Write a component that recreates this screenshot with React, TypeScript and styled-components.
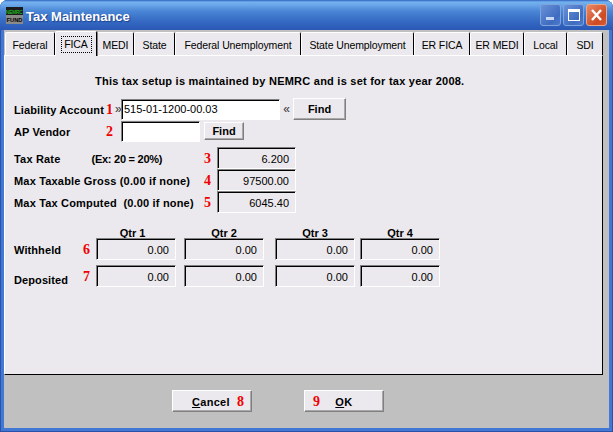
import styled, { createGlobalStyle } from "styled-components";

const GlobalStyle = createGlobalStyle`
    html, body {
        margin: 0;
        padding: 0;
        background: #fff;
        overflow: hidden;
    }
`;

const tabs = [
    { name: "Federal", width: 50 },
    { name: "FICA", width: 42, active: true },
    { name: "MEDI", width: 37 },
    { name: "State", width: 41 },
    { name: "Federal Unemployment", width: 126 },
    { name: "State Unemployment", width: 113 },
    { name: "ER FICA", width: 56 },
    { name: "ER MEDI", width: 54 },
    { name: "Local", width: 43 },
    { name: "SDI", width: 36 },
];

const limits = [
    { label: "Tax Rate", hint: "(Ex: 20 = 20%)", no: 3, value: "6.200" },
    { label: "Max Taxable Gross (0.00 if none)", no: 4, value: "97500.00" },
    { label: "Max Tax Computed  (0.00 if none)", no: 5, value: "6045.40" },
];

const quarters = [
    { name: "Qtr 1", gap: 0, nudge: 7 },
    { name: "Qtr 2", gap: 8, nudge: 0 },
    { name: "Qtr 3", gap: 11, nudge: 0 },
    { name: "Qtr 4", gap: 5, nudge: 0 },
];

const App = () => {
    return (
        <Window>
            <GlobalStyle />
            <TitleBar>
                <svg width="17" height="17" viewBox="0 0 17 17">
                    <rect width="17" height="8" fill="#1c1c1c" />
                    <rect y="8" width="17" height="9" fill="#8a8a8a" />
                    <text x="0" y="6.5" fontSize="5" textLength="16.5" lengthAdjust="spacingAndGlyphs" fontFamily="Liberation Sans" fill="#20e020">NEMRC</text>
                    <text x="0.5" y="15" fontSize="6" textLength="16" lengthAdjust="spacingAndGlyphs" fontWeight="bold" fontFamily="Liberation Sans" fill="#000">FUND</text>
                </svg>
                <TitleText>Tax Maintenance</TitleText>
                <WindowButtons>
                    <WindowButton>
                        <svg width="19" height="20" viewBox="0 0 19 20">
                            <rect x="5" y="12" width="8" height="3" fill="#c9d8f2" />
                        </svg>
                    </WindowButton>
                    <WindowButton>
                        <svg width="19" height="20" viewBox="0 0 19 20">
                            <rect x="4.5" y="4.5" width="11" height="11" fill="none" stroke="#fff" />
                            <rect x="4" y="4" width="12" height="3" fill="#fff" />
                        </svg>
                    </WindowButton>
                    <CloseButton>
                        <svg width="19" height="20" viewBox="0 0 19 20">
                            <path d="M5 5l9 10M14 5l-9 10" stroke="#fff" strokeWidth="2.4" fill="none" />
                        </svg>
                    </CloseButton>
                </WindowButtons>
            </TitleBar>
            <Body>
                <TabStrip>
                    {tabs.map((t) => (
                        <Tab key={t.name} $width={t.width} $active={!!t.active}>
                            {t.active ? <FocusRing>{t.name}</FocusRing> : t.name}
                        </Tab>
                    ))}
                </TabStrip>
                <Panel>
                    <Notice>This tax setup is maintained by NEMRC and is set for tax year 2008.</Notice>

                    <Row $height={22}>
                        <Label $width={92}>Liability Account</Label>
                        <Digit $width={9}>1</Digit>
                        <Chevron>»</Chevron>
                        <Field $width={159} $height={21}>515-01-1200-00.03</Field>
                        <Chevron $wide>«</Chevron>
                        <SmallButton $width={53} $height={22}>Find</SmallButton>
                    </Row>
                    <Row $height={22}>
                        <Label $width={92}>AP Vendor</Label>
                        <Digit $width={15}>2</Digit>
                        <Field $width={79} $height={21} />
                        <SmallButton $width={40} $height={18} $left={4}>Find</SmallButton>
                    </Row>

                    <LimitList>
                        {limits.map((l) => (
                            <Row key={l.no} $height={22}>
                                <LimitLabel>
                                    {l.label}
                                    {l.hint && <Hint>{l.hint}</Hint>}
                                </LimitLabel>
                                <Digit $width={13}>{l.no}</Digit>
                                <Field $width={79} $height={22} $right>{l.value}</Field>
                            </Row>
                        ))}
                    </LimitList>

                    <QuarterHead>
                        {quarters.map((q) => (
                            <QuarterName key={q.name} $gap={q.gap} $nudge={q.nudge}>{q.name}</QuarterName>
                        ))}
                    </QuarterHead>
                    <QuarterRow>
                        <Label $width={69}>Withheld</Label>
                        <Digit $width={13}>6</Digit>
                        {quarters.map((q) => (
                            <QuarterField key={q.name} $gap={q.gap}>0.00</QuarterField>
                        ))}
                    </QuarterRow>
                    <QuarterRow $top={5}>
                        <Label $width={69} $drop={7}>Deposited</Label>
                        <Digit $width={13}>7</Digit>
                        {quarters.map((q) => (
                            <QuarterField key={q.name} $gap={q.gap}>0.00</QuarterField>
                        ))}
                    </QuarterRow>
                </Panel>
                <Footer>
                    <BigButton $pad={19} $gap={7}>
                        <span><u>C</u>ancel</span>
                        <ButtonDigit>8</ButtonDigit>
                    </BigButton>
                    <BigButton $pad={8} $gap={15}>
                        <ButtonDigit>9</ButtonDigit>
                        <span><u>O</u>K</span>
                    </BigButton>
                </Footer>
            </Body>
        </Window>
    );
};

export default App;

const Window = styled.div`
    width: 613px;
    height: 432px;
    box-sizing: border-box;
    display: flex;
    flex-direction: column;
    background: #4277d4;
    box-shadow: inset 1px 0 0 #2a52a8, inset -1px 0 0 #2a52a8, inset 0 -1px 0 #2a52a8;
    border-radius: 8px 8px 0 0;
    overflow: hidden;
    font-family: "Liberation Sans", Arial, sans-serif;
    font-size: 11px;
    color: #000;
`;

const TitleBar = styled.div`
    height: 30px;
    flex-shrink: 0;
    box-sizing: border-box;
    display: flex;
    align-items: center;
    padding: 0 7px 0 6px;
    gap: 3px;
    background: linear-gradient(180deg, #2f62c0 0, #74b2ef 2px, #6aa6e8 5px, #4a86d6 11px, #3f78cc 16px, #3468c2 22px, #2a58b4 30px);
`;

const TitleText = styled.div`
    font-size: 13px;
    font-weight: 700;
    padding-top: 2px;
    color: #fff;
    text-shadow: 1px 1px 1px #1c3f8c;
    flex: 1;
`;

const WindowButtons = styled.div`
    display: flex;
    gap: 4px;
`;

const WindowButton = styled.div`
    width: 19px;
    height: 20px;
    border-radius: 3px;
    border: 1px solid #7ea4de;
    margin: 0 -1px;
    background: linear-gradient(135deg, #6a92d8, #3f6cc0 70%, #4c7ccc);
`;

const CloseButton = styled(WindowButton)`
    border-color: #e8a890;
    background: linear-gradient(135deg, #e88a68, #cf4a22 70%, #d85c34);
`;

const Body = styled.div`
    flex: 1;
    display: flex;
    flex-direction: column;
    margin: 0 4px 4px 4px;
    background: #c0c0c0;
`;

const TabStrip = styled.div`
    height: 25px;
    display: flex;
    align-items: flex-end;
    padding-left: 1px;
`;

const Tab = styled.div<{ $width: number; $active: boolean }>`
    width: ${(p) => p.$width}px;
    height: ${(p) => (p.$active ? 25 : 23)}px;
    box-sizing: border-box;
    display: flex;
    align-items: center;
    justify-content: center;
    padding-top: ${(p) => (p.$active ? 0 : 1)}px;
    margin-bottom: ${(p) => (p.$active ? -1 : 0)}px;
    font-size: 10.5px;
    letter-spacing: -0.1px;
    background: #ebe9ed;
    border-top: 1px solid #fff;
    border-left: 1px solid #fff;
    border-right: 1px solid #000;
    border-radius: 2px 2px 0 0;
    box-shadow: ${(p) => (p.$active ? "1px 0 0 #808080" : "none")};
    position: relative;
    z-index: ${(p) => (p.$active ? 1 : 0)};
    white-space: nowrap;
`;

const FocusRing = styled.span`
    width: 31px;
    height: 17px;
    display: flex;
    align-items: center;
    justify-content: center;
    border: 1px dotted #000;
    box-sizing: border-box;
`;

const Panel = styled.div`
    width: 599px;
    height: 320px;
    box-sizing: border-box;
    padding-left: 9px;
    background: #ebe9ed;
    border-top: 1px solid #fff;
    border-left: 1px solid #fff;
    border-right: 1px solid #000;
    border-bottom: 1px solid #000;
`;

const Notice = styled.div`
    height: 42px;
    box-sizing: border-box;
    padding: 18px 0 0 81px;
    font-weight: 700;
    line-height: 14px;
    letter-spacing: 0.24px;
    white-space: nowrap;
`;

const Row = styled.div<{ $height: number }>`
    display: flex;
    align-items: center;
    height: ${(p) => p.$height}px;
`;

const Label = styled.div<{ $width: number; $drop?: number }>`
    width: ${(p) => p.$width}px;
    flex-shrink: 0;
    font-weight: 700;
    letter-spacing: 0.1px;
    white-space: pre;
    padding-top: ${(p) => p.$drop ?? 2}px;
`;

const LimitLabel = styled.div`
    width: 190px;
    flex-shrink: 0;
    font-weight: 700;
    white-space: pre;
    letter-spacing: 0.18px;
    padding-top: 1px;
`;

const Hint = styled.span`
    margin-left: 31px;
    letter-spacing: -0.25px;
`;

const Digit = styled.div<{ $width: number }>`
    width: ${(p) => p.$width}px;
    flex-shrink: 0;
    padding-top: 2px;
    font-family: "Liberation Serif", serif;
    font-size: 14px;
    font-weight: 700;
    color: #f00000;
`;

const Chevron = styled.div<{ $wide?: boolean }>`
    width: ${(p) => (p.$wide ? 13 : 6)}px;
    flex-shrink: 0;
    font-size: 12px;
    text-align: ${(p) => (p.$wide ? "center" : "left")};
    color: #333;
`;

const Field = styled.div<{ $width: number; $height: number; $right?: boolean }>`
    width: ${(p) => p.$width}px;
    height: ${(p) => p.$height}px;
    flex-shrink: 0;
    box-sizing: border-box;
    padding: ${(p) => (p.$right ? "1px 6px 0" : "0 2px")};
    display: flex;
    align-items: center;
    justify-content: ${(p) => (p.$right ? "flex-end" : "flex-start")};
    background: ${(p) => (p.$right ? "#ebe9ed" : "#fff")};
    border: 1px solid;
    border-color: #808080 #fff #fff #808080;
    box-shadow: inset 1px 1px 0 #000;
`;

const SmallButton = styled.div<{ $width: number; $height: number; $left?: number }>`
    width: ${(p) => p.$width}px;
    height: ${(p) => p.$height}px;
    margin-left: ${(p) => p.$left ?? 0}px;
    flex-shrink: 0;
    box-sizing: border-box;
    display: flex;
    align-items: center;
    justify-content: center;
    font-weight: 700;
    background: #ebe9ed;
    border: 1px solid;
    border-color: #fff #808080 #808080 #fff;
    box-shadow: inset -1px -1px 0 #a8a8a8;
`;

const LimitList = styled.div`
    margin-top: 5px;
`;

const QuarterHead = styled.div`
    display: flex;
    height: 12px;
    margin-top: 13px;
    padding-left: 82px;
`;

const QuarterName = styled.div<{ $gap: number; $nudge: number }>`
    width: 80px;
    box-sizing: border-box;
    margin-left: ${(p) => p.$gap}px;
    padding-right: ${(p) => p.$nudge}px;
    text-align: center;
    font-weight: 700;
    line-height: 14px;
`;

const QuarterRow = styled.div<{ $top?: number }>`
    display: flex;
    align-items: center;
    height: 22px;
    margin-top: ${(p) => p.$top ?? 0}px;
`;

const QuarterField = styled.div<{ $gap: number }>`
    width: 80px;
    height: 22px;
    margin-left: ${(p) => p.$gap}px;
    flex-shrink: 0;
    box-sizing: border-box;
    padding: 1px 6px 0 0;
    display: flex;
    align-items: center;
    justify-content: flex-end;
    border: 1px solid;
    border-color: #808080 #fff #fff #808080;
    box-shadow: inset 1px 1px 0 #000;
`;

const Footer = styled.div`
    display: flex;
    gap: 52px;
    padding: 15px 0 0 168px;
`;

const BigButton = styled.div<{ $pad: number; $gap: number }>`
    width: 80px;
    height: 22px;
    box-sizing: border-box;
    display: flex;
    align-items: center;
    padding: 2px 0 0 ${(p) => p.$pad}px;
    gap: ${(p) => p.$gap}px;
    font-weight: 700;
    letter-spacing: 0.3px;
    background: #ebe9ed;
    border: 1px solid;
    border-color: #fff #808080 #808080 #fff;
    box-shadow: inset -1px -1px 0 #a8a8a8;
`;

const ButtonDigit = styled.span`
    font-family: "Liberation Serif", serif;
    font-size: 14px;
    font-weight: 700;
    color: #f00000;
`;
